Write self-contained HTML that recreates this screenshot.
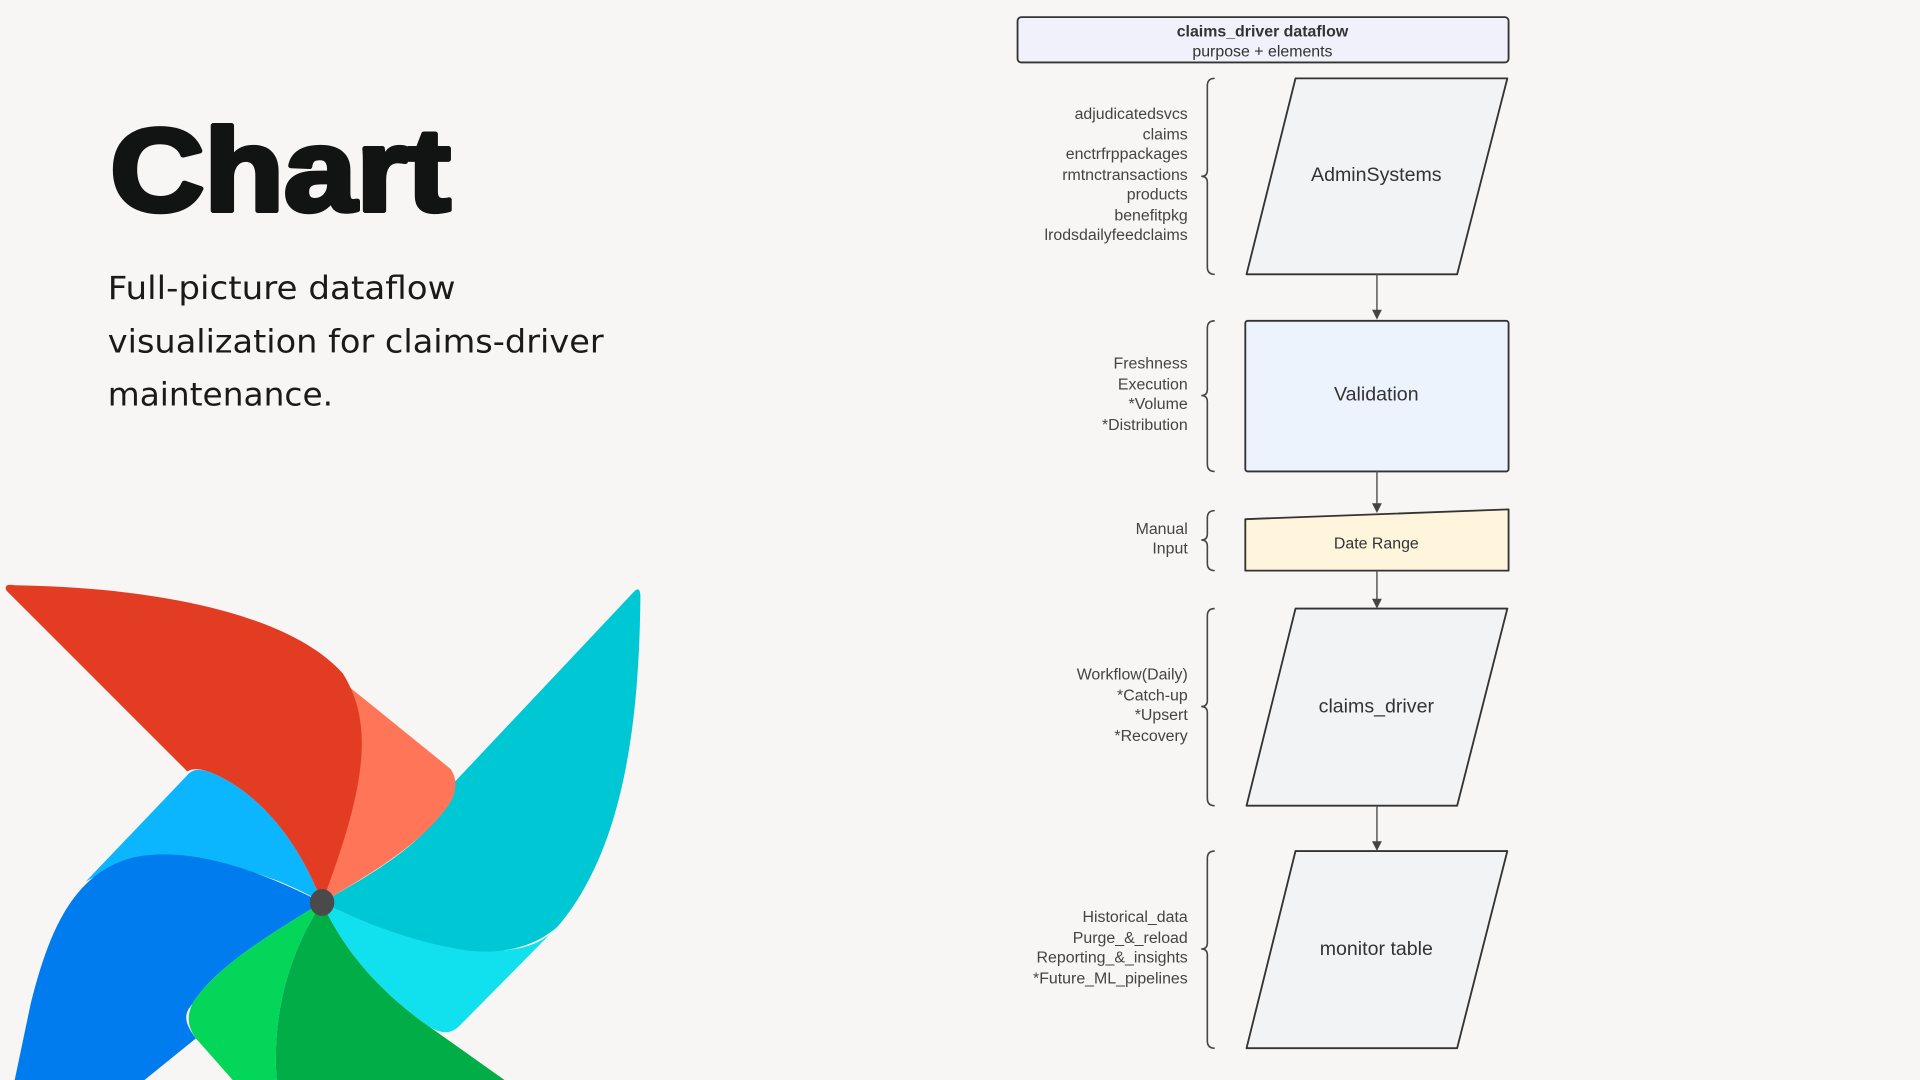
<!DOCTYPE html>
<html><head><meta charset="utf-8"><style>
html,body{margin:0;padding:0;background:#f7f6f4;}
svg{display:block}
.l{font-family:"Liberation Sans",sans-serif;font-size:13px;fill:#444;text-anchor:end}
.c{font-family:"Liberation Sans",sans-serif;fill:#333;text-anchor:middle}
.b{fill:none;stroke:#444;stroke-width:1.3}
.s{stroke:#333;stroke-width:1.5}
</style></head><body>
<svg width="1920" height="1080" viewBox="0 0 1568 882" xmlns="http://www.w3.org/2000/svg">
<rect width="1568" height="882" fill="#f7f6f4"/>
<text x="90" y="172" font-family="Liberation Sans,sans-serif" font-weight="900" font-size="96" fill="#121414" stroke="#121414" stroke-width="4" stroke-linejoin="round" textLength="278" lengthAdjust="spacingAndGlyphs">Chart</text>
<g font-family="DejaVu Sans,sans-serif" font-size="26" fill="#1a1a1a" lengthAdjust="spacingAndGlyphs">
<text x="88" y="244" textLength="284" lengthAdjust="spacingAndGlyphs">Full-picture dataflow</text>
<text x="88" y="288" textLength="405" lengthAdjust="spacingAndGlyphs">visualization for claims-driver</text>
<text x="88" y="331" textLength="184" lengthAdjust="spacingAndGlyphs">maintenance.</text>
</g>
<!-- pinwheel -->
<path fill="#0CB6FF" d="M263,737 C245,690 215,650 175,632 C165,628 158,627 153,633 L70,720 C120,690 200,700 263,737 Z"/>
<path fill="#017CEE" d="M263,737 C220,715 160,690 110,700 C60,712 40,760 25,820 L12,882 L118,882 L160,848 C150,835 150,828 157,820 C175,790 225,760 263,737 Z"/>
<path fill="#04D659" d="M263,737 C225,760 175,790 157,820 Q150,835 160,848 L190,882 L226,882 C222,830 235,780 263,737 Z"/>
<path fill="#00AD46" d="M263,737 C280,775 310,810 350,838 L412,882 L226,882 C222,830 235,780 263,737 Z"/>
<path fill="#11E1EE" d="M263,737 C300,755 340,770 395,776 C425,778 445,770 456,756 L375,838 Q365,848 350,838 C310,810 280,775 263,737 Z"/>
<path fill="#00C7D4" d="M263,737 C300,715 360,685 370,640 L517,484 Q523,477 523,488 C522,580 512,690 456,756 C430,780 395,778 380,776 C340,770 300,755 263,737 Z"/>
<path fill="#FF7557" d="M284,560 L368,628 Q376,640 368,655 C345,690 300,715 263,737 C290,660 305,610 284,560 Z"/>
<path fill="#E23C22" d="M5,482 Q3,476 12,478 C140,480 240,505 280,550 C305,590 300,640 263,737 C245,690 215,650 175,632 C165,628 158,627 153,630 Z"/>
<ellipse cx="263" cy="737" rx="10" ry="11" fill="#4a4a4a"/>
<!-- chart -->
<rect x="831" y="14" width="401" height="37" rx="3" fill="#f1f1fb" class="s"/>
<text x="1031" y="30" class="c" font-size="13" font-weight="bold">claims_driver dataflow</text>
<text x="1031" y="46" class="c" font-size="13">purpose + elements</text>

<path d="M1058,64 L1231,64 L1190,224 L1018,224 Z" fill="#f2f3f5" class="s" stroke-linejoin="round"/>
<text x="1124" y="148" class="c" font-size="16">AdminSystems</text>
<rect x="1017" y="262" width="215" height="123" rx="2" fill="#edf3fc" class="s"/>
<text x="1124" y="327" class="c" font-size="16">Validation</text>
<path d="M1017,424 L1232,416 L1232,466 L1017,466 Z" fill="#fef5dc" class="s" stroke-linejoin="round"/>
<text x="1124" y="448" class="c" font-size="13">Date Range</text>
<path d="M1058,497 L1231,497 L1190,658 L1018,658 Z" fill="#f2f3f5" class="s" stroke-linejoin="round"/>
<text x="1124" y="582" class="c" font-size="16">claims_driver</text>
<path d="M1058,695 L1231,695 L1190,856 L1018,856 Z" fill="#f2f3f5" class="s" stroke-linejoin="round"/>
<text x="1124" y="780" class="c" font-size="16">monitor table</text>

<g stroke="#555" stroke-width="1.2" fill="#444">
<line x1="1124.5" y1="224" x2="1124.5" y2="255"/><path d="M1120.5,253 L1128.5,253 L1124.5,261 Z" stroke="none"/>
<line x1="1124.5" y1="385" x2="1124.5" y2="412"/><path d="M1120.5,411 L1128.5,411 L1124.5,419 Z" stroke="none"/>
<line x1="1124.5" y1="466" x2="1124.5" y2="490"/><path d="M1120.5,489 L1128.5,489 L1124.5,497 Z" stroke="none"/>
<line x1="1124.5" y1="658" x2="1124.5" y2="688"/><path d="M1120.5,687 L1128.5,687 L1124.5,695 Z" stroke="none"/>
</g>

<path class="b" d="M992,64 Q986,64 986,70 L986,139 Q986,144 981,144 Q986,144 986,149 L986,218 Q986,224 992,224"/>
<path class="b" d="M992,262 Q986,262 986,268 L986,318 Q986,323 981,323 Q986,323 986,328 L986,379 Q986,385 992,385"/>
<path class="b" d="M992,417 Q986,417 986,423 L986,436 Q986,441 981,441 Q986,441 986,446 L986,460 Q986,466 992,466"/>
<path class="b" d="M992,497 Q986,497 986,503 L986,572 Q986,577 981,577 Q986,577 986,582 L986,652 Q986,658 992,658"/>
<path class="b" d="M992,695 Q986,695 986,701 L986,770 Q986,775 981,775 Q986,775 986,780 L986,850 Q986,856 992,856"/>

<text class="l" x="970" y="97">adjudicatedsvcs</text>
<text class="l" x="970" y="114">claims</text>
<text class="l" x="970" y="130">enctrfrppackages</text>
<text class="l" x="970" y="147">rmtnctransactions</text>
<text class="l" x="970" y="163">products</text>
<text class="l" x="970" y="180">benefitpkg</text>
<text class="l" x="970" y="196">lrodsdailyfeedclaims</text>
<text class="l" x="970" y="301">Freshness</text>
<text class="l" x="970" y="318">Execution</text>
<text class="l" x="970" y="334">*Volume</text>
<text class="l" x="970" y="351">*Distribution</text>
<text class="l" x="970" y="436">Manual</text>
<text class="l" x="970" y="452">Input</text>
<text class="l" x="970" y="555">Workflow(Daily)</text>
<text class="l" x="970" y="572">*Catch-up</text>
<text class="l" x="970" y="588">*Upsert</text>
<text class="l" x="970" y="605">*Recovery</text>
<text class="l" x="970" y="753">Historical_data</text>
<text class="l" x="970" y="770">Purge_&amp;_reload</text>
<text class="l" x="970" y="786">Reporting_&amp;_insights</text>
<text class="l" x="970" y="803">*Future_ML_pipelines</text>
</svg>
</body></html>
